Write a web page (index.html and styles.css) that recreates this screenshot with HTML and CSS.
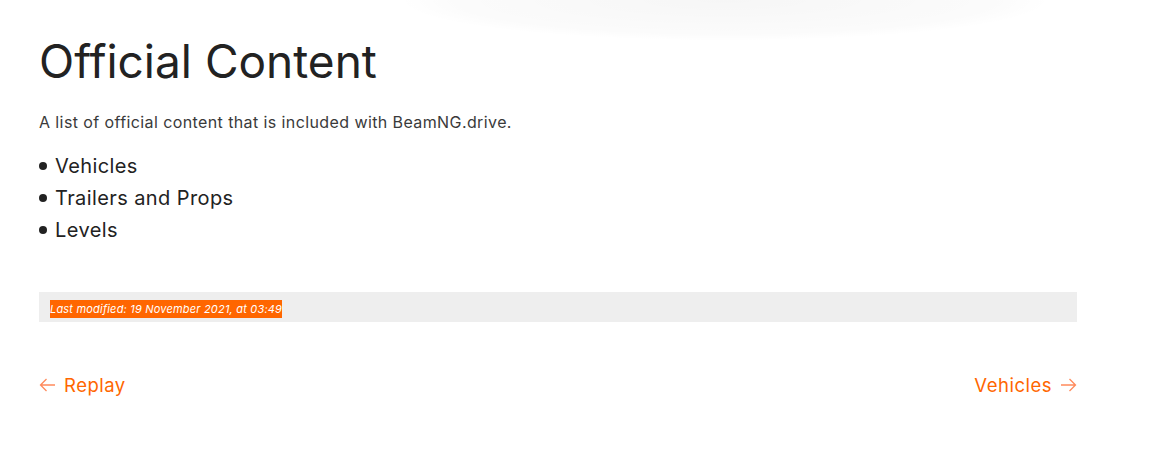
FILE: index.html
```html
<!DOCTYPE html>
<html lang="en">

<head>
    <meta charset="UTF-8" />
    <meta name="viewport" content="width=device-width, initial-scale=1.0" />
    <title>Official Content</title>
    <link rel="stylesheet" href="styles.css">
</head>

<body>
    <div class="top-shade"></div>

    <main class="content">
        <h1>Official Content</h1>
        <p class="lead">A list of official content that is included with BeamNG.drive.</p>

        <ul class="topics">
            <li><a href="#">Vehicles</a></li>
            <li><a href="#">Trailers and Props</a></li>
            <li><a href="#">Levels</a></li>
        </ul>

        <div class="modified">
            <span>Last modified: 19 November 2021, at 03:49</span>
        </div>

        <nav class="pager">
            <a href="#" class="prev">
                <svg width="17" height="14" viewBox="0 0 17 14">
                    <path d="M16 7H1.5M7.5 1L1.5 7l6 6" fill="none" stroke="currentColor" stroke-width="1.3" />
                </svg>
                Replay
            </a>
            <a href="#" class="next">
                Vehicles
                <svg width="17" height="14" viewBox="0 0 17 14">
                    <path d="M1 7h14.5M9.5 1l6 6-6 6" fill="none" stroke="currentColor" stroke-width="1.3" />
                </svg>
            </a>
        </nav>
    </main>
</body>

</html>
```

FILE: styles.css
```css
body {
    margin: 0;
    font-family: Inter, "Noto Sans", sans-serif;
    color: #222;
    background: #fff;
}

/* faint shadow at the top edge */
.top-shade {
    position: absolute;
    top: -40px;
    left: 405px;
    width: 640px;
    height: 80px;
    background: radial-gradient(ellipse at center, rgba(0, 0, 0, 0.035) 0%, rgba(0, 0, 0, 0.015) 60%, rgba(0, 0, 0, 0) 72%);
}

.content {
    width: 1038px;
    padding: 37px 0 0 39px;
}

h1 {
    margin: 0;
    font-size: 46px;
    font-weight: 400;
    line-height: 48px;
    color: #222;
}

.lead {
    margin: 26px 0 0;
    font-size: 16px;
    letter-spacing: 0.4px;
    line-height: 22px;
    color: #3a3a3a;
}

.topics {
    list-style: none;
    margin: 17px 0 0;
    padding: 0;
}

.topics li {
    display: flex;
    align-items: center;
    font-size: 20px;
    letter-spacing: 0.4px;
    line-height: 32px;
}

.topics li::before {
    content: "";
    width: 8px;
    height: 8px;
    border-radius: 50%;
    background: #222;
    margin-right: 8px;
}

.topics a {
    color: #222;
    text-decoration: none;
}

.modified {
    margin-top: 46px;
    background: #eee;
    padding: 6px 11px 4px;
    line-height: 18px;
}

.modified span {
    background: #ff6600;
    color: #fff;
    font-size: 11px;
    letter-spacing: 0.2px;
    font-style: italic;
    display: inline-block;
}

.pager {
    display: flex;
    justify-content: space-between;
    margin-top: 52px;
}

.pager a {
    display: flex;
    align-items: center;
    gap: 8px;
    color: #ff6600;
    text-decoration: none;
    font-size: 18.5px;
    letter-spacing: 0.5px;
}

.pager svg {
    color: #ff8a5c;
}
```
